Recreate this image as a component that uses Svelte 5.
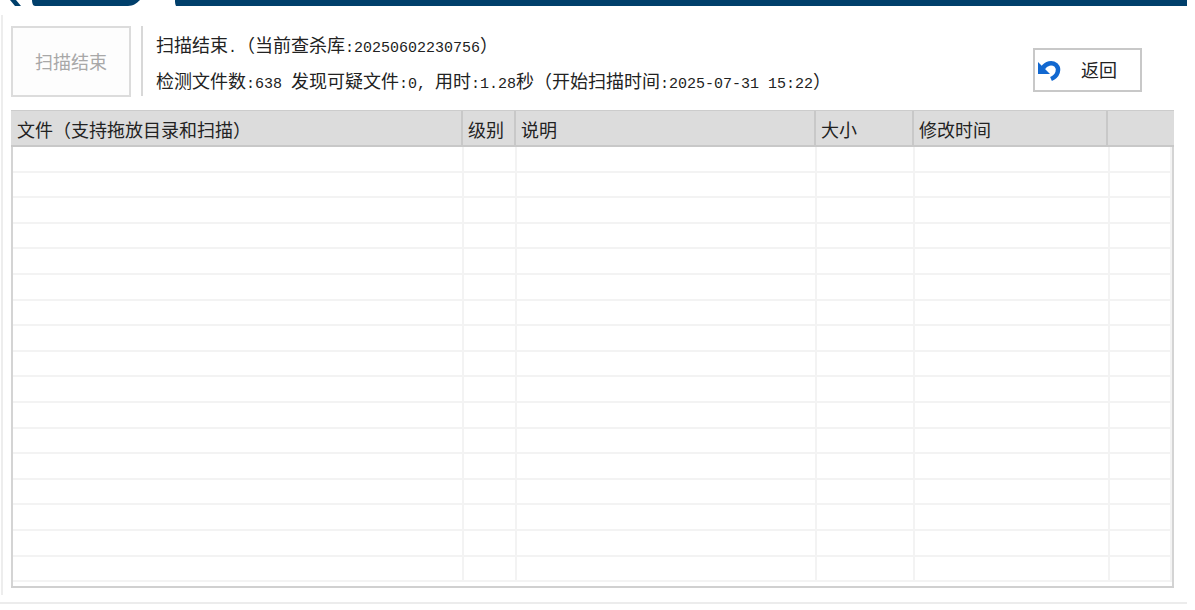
<script>
	const columns = [
		{ name: '文件（支持拖放目录和扫描）', head: 452, body: 451 },
		{ name: '级别', head: 53, body: 53 },
		{ name: '说明', head: 300, body: 300 },
		{ name: '大小', head: 98, body: 98 },
		{ name: '修改时间', head: 194, body: 195 },
		{ name: '', head: 66, body: 62 }
	]
	const rows = Array.from({ length: 17 })
</script>

<div class="page">
	<header class="banner">
		<svg class="logo" width="177" height="6" viewBox="0 0 177 6">
			<path d="M10 0h6l5 6h-6zM32 0h108c-3 3-7 6-12 6H35c-2 0-3-3-3-6zM175 0h2v6h-1c-1-2-1-4-1-6z" fill="#003f6b" />
		</svg>
		<div class="bar"></div>
	</header>

	<main class="panel">
		<div class="inner">
			<section class="top">
				<button class="scan" disabled>扫描结束</button>
				<div class="status">
					<p>扫描结束<span>.</span>（当前查杀库<span>:20250602230756</span>）</p>
					<p>检测文件数<span>:638&nbsp;</span>发现可疑文件<span>:0,&nbsp;</span>用时<span>:1.28</span>秒（开始扫描时间<span>:2025-07-31 15:22</span>）</p>
				</div>
				<button class="back">
					<svg width="26" height="26" viewBox="0 0 26 26">
						<path d="M1 5v12h12z" fill="#1268d0" />
						<path d="M6 11C9 6 15 5 19 8c4 4 2 11-5 14" fill="none" stroke="#1268d0" stroke-width="4.5" />
					</svg>
					<span>返回</span>
				</button>
			</section>

			<section class="table">
				<div class="head">
					{#each columns as col}
						<div class="th" style="width: {col.head}px">{col.name}</div>
					{/each}
				</div>
				<div class="body">
					{#each rows as _}
						<div class="row">
							{#each columns as col}
								<div class="td" style="width: {col.body}px"></div>
							{/each}
						</div>
					{/each}
				</div>
			</section>
		</div>
	</main>
</div>

<style>
	:global(body) {
		background: #fff;
	}
	.page {
		width: 1195px;
		height: 610px;
		overflow: hidden;
		font-family: 'Noto Sans CJK SC', sans-serif;
		color: #222;
	}
	.banner {
		display: flex;
		height: 6px;
	}
	.logo {
		flex: none;
	}
	.bar {
		width: 1010px;
		height: 6px;
		background: #003f6b;
	}
	.panel {
		width: 1187px;
		height: 589px;
		margin-top: 9px;
		box-sizing: border-box;
		border-bottom: 2px solid #ececec;
	}
	.inner {
		height: 580px;
		margin-left: 1px;
		padding: 11px 0 0 8px;
		box-sizing: border-box;
		border-left: 2px solid #ededed;
	}
	.top {
		display: flex;
		height: 71px;
	}
	button {
		font-family: inherit;
		background: #fff;
		padding: 0;
	}
	.scan {
		width: 120px;
		height: 71px;
		border: 2px solid #dcdcdc;
		background: #fdfdfd;
		color: #a8a8a8;
		font-size: 18px;
		line-height: 24px;
		padding-bottom: 2px;
	}
	.status {
		width: 877px;
		height: 70px;
		margin-left: 10px;
		padding-left: 13px;
		border-left: 2px solid #d8d8d8;
	}
	.status p {
		margin: 0;
		white-space: nowrap;
		font-size: 18px;
		line-height: 36px;
		position: relative;
		top: 0;
	}
	.status span {
		font-family: 'Liberation Mono', monospace;
		font-size: 15px;
		line-height: 0;
	}
	.back {
		display: flex;
		align-items: center;
		width: 109px;
		height: 44px;
		margin-top: 22px;
		border: 2px solid #c8c8c8;
		font-size: 18px;
		color: #222;
	}
	.back svg {
		margin-left: 2px;
	}
	.back span {
		margin-left: 18px;
		position: relative;
		top: -1px;
	}
	.table {
		width: 1163px;
		height: 478px;
		margin-top: 13px;
		overflow: hidden;
		box-sizing: border-box;
		border-bottom: 2px solid #d0d0d0;
	}
	.head {
		display: flex;
		height: 37px;
		background: #dcdcdc;
		border-top: 1px solid #ccc;
		border-bottom: 2px solid #c8c8c8;
		box-sizing: border-box;
	}
	.th {
		box-sizing: border-box;
		flex: none;
		padding-left: 5px;
		border-right: 2px solid #c8c8c8;
		font-size: 18px;
		line-height: 36px;
		white-space: nowrap;
	}
	.th:first-child {
		padding-left: 6px;
	}
	.th:last-child {
		border-right: 0;
	}
	.body {
		height: 441px;
		border-left: 2px solid #d4d4d4;
		border-right: 2px solid #d4d4d4;
		overflow: hidden;
	}
	.row {
		display: flex;
		height: 25.6px;
		box-sizing: border-box;
		border-bottom: 2px solid #f3f3f3;
	}
	.td {
		flex: none;
		box-sizing: border-box;
		border-right: 2px solid #f3f3f3;
	}
</style>
